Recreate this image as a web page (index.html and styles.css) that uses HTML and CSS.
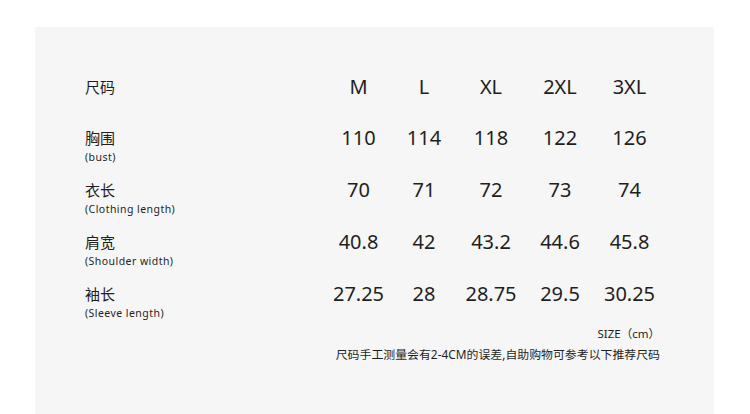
FILE: index.html
```html
<!DOCTYPE html>
<html lang="zh">
<head>
<meta charset="utf-8">
<link rel="stylesheet" href="styles.css">
</head>
<body>
<div class="panel">
  <div class="row head">
    <div class="label"><div class="zh">尺码</div></div>
    <div class="val">M</div><div class="val">L</div><div class="val">XL</div><div class="val">2XL</div><div class="val">3XL</div>
  </div>
  <div class="row">
    <div class="label"><div class="zh">胸围</div><div class="en">(bust)</div></div>
    <div class="val">110</div><div class="val">114</div><div class="val">118</div><div class="val">122</div><div class="val">126</div>
  </div>
  <div class="row">
    <div class="label"><div class="zh">衣长</div><div class="en">(Clothing length)</div></div>
    <div class="val">70</div><div class="val">71</div><div class="val">72</div><div class="val">73</div><div class="val">74</div>
  </div>
  <div class="row">
    <div class="label"><div class="zh">肩宽</div><div class="en">(Shoulder width)</div></div>
    <div class="val">40.8</div><div class="val">42</div><div class="val">43.2</div><div class="val">44.6</div><div class="val">45.8</div>
  </div>
  <div class="row">
    <div class="label"><div class="zh">袖长</div><div class="en">(Sleeve length)</div></div>
    <div class="val">27.25</div><div class="val">28</div><div class="val">28.75</div><div class="val">29.5</div><div class="val">30.25</div>
  </div>
  <div class="foot">
    <div class="unit">SIZE（cm）</div>
    <div class="note">尺码手工测量会有2-4CM的误差,自助购物可参考以下推荐尺码</div>
  </div>
</div>
</body>
</html>
```
FILE: styles.css
```css
html, body {
  margin: 0;
  padding: 0;
  background: #ffffff;
}
body {
  font-family: "Noto Sans", "Noto Sans CJK SC", sans-serif;
  color: #1f1f1f;
}
.panel {
  margin: 27px 36px 0 35px;
  min-height: 387px;
  background: #f6f6f6;
  padding: 48px 50px 0 50px;
  box-sizing: border-box;
}
.row {
  display: grid;
  grid-template-columns: 241px 65px 66px 68px 70px 69px;
  width: 579px;
  margin-bottom: 14px;
}
.row.head {
  margin-bottom: 27px;
}
.zh {
  font-size: 15px;
  line-height: 24px;
  height: 24px;
}
.en {
  font-size: 10.5px;
  line-height: 14px;
  height: 14px;
  letter-spacing: 0.45px;
}
.val {
  text-align: center;
  font-size: 20px;
  line-height: 24px;
  height: 24px;
}
.foot {
  width: 575px;
  margin-top: -10px;
  text-align: right;
  font-size: 11.5px;
  line-height: 20px;
}
.note {
  font-size: 11.9px;
}
```
